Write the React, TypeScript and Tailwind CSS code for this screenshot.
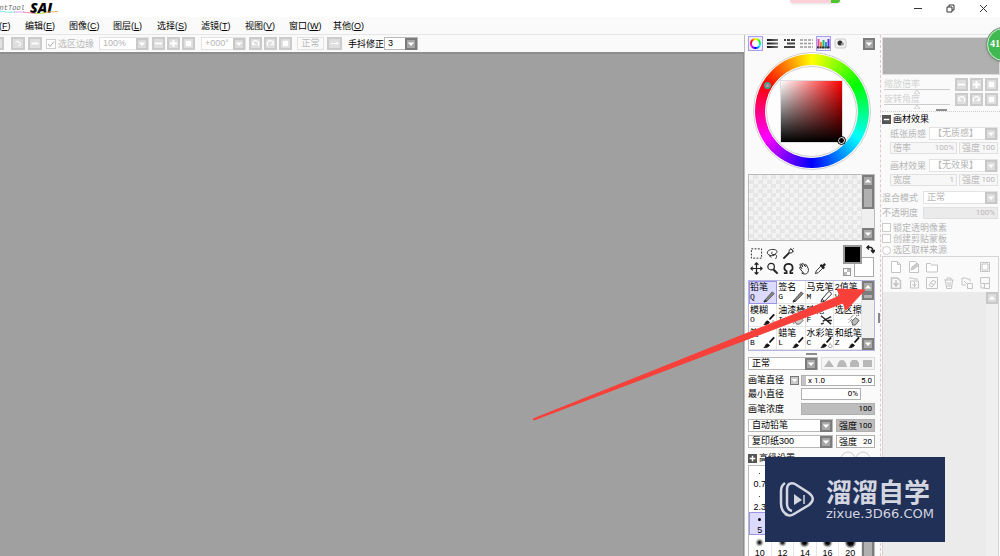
import type { ReactNode } from "react";
import clsx from "clsx";

const menus = [
  ["文件", "F"],
  ["编辑", "E"],
  ["图像", "C"],
  ["图层", "L"],
  ["选择", "S"],
  ["滤镜", "T"],
  ["视图", "V"],
  ["窗口", "W"],
  ["其他", "O"],
];

const brushes = [
  { name: "铅笔", key: "Q", kind: "pencil" },
  { name: "签名", key: "G", kind: "pencil" },
  { name: "马克笔", key: "M", kind: "marker" },
  { name: "2值笔", key: "V", kind: "pencil" },
  { name: "模糊", key: "O", kind: "water" },
  { name: "油漆桶", key: "I", kind: "bucket" },
  { name: "喷枪", key: "F", kind: "spray" },
  { name: "选区擦", key: "", kind: "select" },
  { name: "笔", key: "B", kind: "brush" },
  { name: "蜡笔", key: "L", kind: "brush" },
  { name: "水彩笔", key: "C", kind: "water" },
  { name: "和纸笔", key: "Z", kind: "brush" },
];

const sizes = [
  "0.7", "", "", "", "",
  "2.3", "", "", "", "",
  "5", "", "", "", "",
  "10", "12", "14", "16", "20",
];

function Glyph({ name }: { name: string }) {
  const shapes: Record<string, ReactNode> = {
    down: <path d="M1 3h8L5 7.500z" fill="currentColor" />,
    up: <path d="M1 7h8L5 2.500z" fill="currentColor" />,
    minus: <path d="M1 5h8" stroke="currentColor" strokeWidth="2" />,
    plus: <path d="M1 5h8M5 1v8" stroke="currentColor" strokeWidth="2" />,
    box: <rect x="2" y="2" width="6" height="6" fill="currentColor" />,
    left: <path d="M7.5 7.5A3.3 3.3 0 1 0 2 6M2 3v3h3" stroke="currentColor" strokeWidth="1.500" fill="none" />,
    right: <path d="M2.5 7.5A3.3 3.3 0 1 1 8 6M8 3v3H5" stroke="currentColor" strokeWidth="1.500" fill="none" />,
    undo: <path d="M2 4l3-2v2h2.5v3H5" stroke="currentColor" fill="none" />,
    flip: <path d="M1 5h8M7 3l2 2-2 2" stroke="currentColor" fill="none" />,
  };
  return (
    <svg viewBox="0 0 10 10" className="size-full" aria-hidden="true">
      {shapes[name]}
    </svg>
  );
}

function SmallButton({ icon, label, className }: { icon: string; label: string; className?: string }) {
  return (
    <button
      aria-label={label}
      className={clsx(
        "size-[13px] shrink-0 border-2 border-[#cbcbcb] bg-[#dedede] text-white",
        className
      )}
    >
      <Glyph name={icon} />
    </button>
  );
}

function Arrow({ icon = "down", faded = false }: { icon?: string; faded?: boolean }) {
  return (
    <span
      className={clsx(
        "block size-3 shrink-0 border-2 text-white",
        faded ? "border-[#c8c8c8] bg-[#dcdcdc]" : "border-[#7c7c7c] bg-[#a8a8a8]"
      )}
    >
      <Glyph name={icon} />
    </span>
  );
}

function Dropdown({ label, value, faded, className }: { label: string; value: string; faded?: boolean; className?: string }) {
  return (
    <div
      className={clsx(
        "flex h-[13px] items-center border bg-white",
        faded ? "border-[#e2e2e2] text-[#b5b5b5]" : "border-[#b8b8b8]",
        className
      )}
    >
      <select aria-label={label} className="h-[11px] min-w-0 flex-1 appearance-none pl-[3px] leading-[11px] outline-none">
        <option>{value}</option>
      </select>
      <Arrow faded={faded} />
    </div>
  );
}

function ValueBox({ label, text, value, faded, fill, className }: {
  label: string;
  text?: boolean;
  value: string;
  faded?: boolean;
  fill?: boolean;
  className?: string;
}) {
  return (
    <label
      className={clsx(
        "flex h-3 items-center border px-0.5",
        faded ? "border-[#e0e0e0] text-[#b8b8b8]" : "border-[#b0b0b0]",
        fill ? (faded ? "bg-[#ebebeb]" : "bg-[#bdbdbd]") : faded ? "bg-[#f7f7f7]" : "bg-white",
        className
      )}
    >
      {text && <span className="shrink-0">{label}</span>}
      <input
        aria-label={label}
        defaultValue={value}
        className="h-[10px] w-0 min-w-0 flex-1 text-right font-['Roboto',sans-serif] text-[8px] leading-[10px] outline-none"
      />
    </label>
  );
}

function Scrollbar({ thumb, bottom = true, faded = false }: { thumb: string; bottom?: boolean; faded?: boolean }) {
  return (
    <div className="flex w-3 shrink-0 flex-col bg-[#efefef]">
      <Arrow icon="up" faded={faded} />
      {thumb && <div className={clsx("border-2 border-[#7c7c7c] bg-[#b0b0b0]", thumb)} />}
      <div className="flex-1" />
      {bottom && <Arrow />}
    </div>
  );
}

function Grip() {
  return <div className="mx-auto h-[2px] w-[11px] shrink-0 bg-[#8d8d8d]" />;
}

function TitleBar() {
  return (
    <header className="flex h-[17px] shrink-0 items-start justify-between bg-white">
      <div className="relative flex h-[15px] items-center">
        <span className="-ml-[13px] w-[43px] font-['Liberation_Mono',monospace] text-[7px] text-[#666] italic">
          PaintTool
        </span>
        <span className="font-['Open_Sans',sans-serif] text-[14px] leading-[15px] font-extrabold text-black italic">SAI</span>
        <svg className="absolute top-[10px] left-0 h-[5px] w-[60px]" viewBox="0 0 60 5" fill="none" aria-hidden="true">
          <path d="M0 1q7 2 15 1" stroke="#7fe8e0" />
          <path d="M14 2h10" stroke="#d9a7ee" />
          <path d="M23 2l12 1.500" stroke="#f58bb0" />
          <path d="M35 3.500q6 .5 12-1" stroke="#bce05a" />
          <path d="M46 2.500q6-1 12-1" stroke="#f4b26a" />
        </svg>
      </div>
      <div className="flex h-4 items-center text-[#333]">
        <button aria-label="最小化" className="flex w-[33px] justify-center">
          <svg className="size-[9px]" viewBox="0 0 9 9"><path d="M1 4.500h8" stroke="currentColor" /></svg>
        </button>
        <button aria-label="还原" className="flex w-[33px] justify-center">
          <svg className="size-[9px]" viewBox="0 0 9 9" fill="none" stroke="currentColor">
            <path d="M1 3h5v5H1zM3 3V1h5v5H6" />
          </svg>
        </button>
        <button aria-label="关闭" className="flex w-[33px] justify-center">
          <svg className="size-[9px]" viewBox="0 0 9 9"><path d="M1 1l7 7M8 1L1 8" stroke="currentColor" /></svg>
        </button>
      </div>
    </header>
  );
}

function Toolbar() {
  return (
    <div className="flex h-[17px] shrink-0 items-center bg-[#fafafa] text-[#b8b8b8]">
      <SmallButton icon="box" label="取消选择" className="-ml-[9px]" />
      <SmallButton icon="undo" label="反选" className="ml-[7px] w-[14px]" />
      <SmallButton icon="minus" label="显示选区" className="ml-[3px] w-[14px]" />
      <label className="ml-1 flex items-center gap-0.5">
        <input type="checkbox" defaultChecked className="peer sr-only" />
        <svg className="size-[10px] border border-[#cfcfcf] bg-white" viewBox="0 0 8 8" fill="none">
          <path d="M1 4l2 2.500 4-5" stroke="#aaa" />
        </svg>
        选区边缘
      </label>
      <Dropdown label="缩放" value="100%" faded className="ml-[5px] w-[50px]" />
      <div className="ml-[3px] flex gap-[2px]">
        <SmallButton icon="minus" label="缩小" />
        <SmallButton icon="plus" label="放大" />
        <SmallButton icon="box" label="重置缩放" />
      </div>
      <Dropdown label="角度" value="+000°" faded className="ml-[6px] w-[45px]" />
      <div className="ml-[3px] flex gap-[2px]">
        <SmallButton icon="left" label="左旋" />
        <SmallButton icon="right" label="右旋" />
        <SmallButton icon="box" label="重置角度" />
      </div>
      <button className="ml-[5px] h-[13px] w-[27px] border border-[#e2e2e2] leading-[11px]">正常</button>
      <SmallButton icon="flip" label="水平翻转" className="ml-[3px] w-[15px]" />
      <span className="ml-[6px] text-black">手抖修正</span>
      <Dropdown label="手抖修正" value="3" className="w-[34px] text-black" />
    </div>
  );
}

function ColorTabs() {
  return (
    <div className="flex h-[15px] shrink-0 items-center justify-between">
      <div className="flex gap-[2px]">
        <button aria-label="色环" className="size-[15px] border border-[#a79df0] bg-[#eeecff] p-px">
          <span className="block size-[11px] rounded-full bg-[conic-gradient(from_-60deg,red,yellow,lime,cyan,blue,magenta,red)] p-[2px]">
            <span className="block size-full rounded-full bg-white" />
          </span>
        </button>
        <button aria-label="RGB滑块" className="size-[15px]">
          <svg viewBox="0 0 15 15">
            <defs>
              <linearGradient id="bar" x2="1"><stop stopColor="#111" /><stop offset="1" stopColor="#777" /></linearGradient>
            </defs>
            <path d="M2 3h11v2H2zM2 6.500h11v2H2zM2 10h11v2H2z" fill="url(#bar)" />
          </svg>
        </button>
        <button aria-label="HSV滑块" className="size-[15px]">
          <svg viewBox="0 0 15 15">
            <path d="M2 3h2v2H2zM5 3h3v2H5zM9 3h4v2H9zM5 6.500h8v2H5zM2 10h11v2H2z" fill="#444" />
          </svg>
        </button>
        <button aria-label="中间色" className="size-[15px]">
          <svg viewBox="0 0 15 15">
            <path d="M1 4h13M1 7.500h13M1 11h13" stroke="#999" strokeWidth="1.500" strokeDasharray="3 1" />
          </svg>
        </button>
        <button aria-label="色板" className="size-[15px] border border-[#a79df0] bg-[#eeecff]">
          <svg viewBox="0 0 13 13">
            <path d="M1.500 2v9" stroke="#ec4a9a" strokeWidth="2" />
            <path d="M4 5v6" stroke="#e8902e" strokeWidth="2" />
            <path d="M6.500 3v8" stroke="#29b867" strokeWidth="2" />
            <path d="M9 5v6" stroke="#2a96e0" strokeWidth="2" />
            <path d="M11.500 2v9" stroke="#6b35d9" strokeWidth="2" />
            <path d="M0 10.500h13" stroke="#333" strokeWidth="2" strokeDasharray="2 .5" />
          </svg>
        </button>
        <button aria-label="便笺" className="size-[15px]">
          <svg viewBox="0 0 15 15">
            <rect x="2" y="3" width="11" height="9" rx="2" fill="#f1f1f1" stroke="#ccc" />
            <circle cx="7" cy="7" r="2.500" fill="#333" />
            <circle cx="9.500" cy="8" r="1.500" fill="#999" />
          </svg>
        </button>
      </div>
      <Arrow />
    </div>
  );
}

function ColorWheel() {
  return (
    <div className="relative mx-auto mt-px flex size-[118px] shrink-0 items-center justify-center rounded-full border border-[#d0d0d0] bg-white p-px">
      <div className="flex size-full items-center justify-center rounded-full bg-[conic-gradient(from_-60deg,red,yellow,lime,cyan,blue,magenta,red)]">
        <div className="flex size-[93px] items-center justify-center rounded-full border border-white bg-[#d0d0d0] p-px">
          <div className="flex size-full items-center justify-center rounded-full bg-[#fdfdfd]">
            <div className="size-[63px] border border-[#ddd] bg-[linear-gradient(to_top,#000,transparent),linear-gradient(to_right,#fff,#f00)]" />
          </div>
        </div>
      </div>
      <span className="absolute top-[29px] left-[10px] size-[7px] rounded-full border-2 border-[#4a9d96] bg-[#d88]" />
      <span className="absolute top-[84px] left-[84px] size-[7px] rounded-full border border-white bg-black outline outline-black" />
    </div>
  );
}

function ToolIcon({ kind }: { kind: string }) {
  return (
    <svg viewBox="0 0 14 14" className="size-[13px]" fill="none" stroke="#222" aria-hidden="true">
      {kind === "rect" && <rect x="1.500" y="2" width="11" height="10" strokeDasharray="2 1.500" />}
      {kind === "lasso" && (
        <path d="M9 9C4 10 1 8 1.500 5.500S7 2 10 3s2 4-1 5-4-2-2-2.500M9 8c3 0 3 3 1 5M4 9v1l2 1" />
      )}
      {kind === "wand" && (
        <>
          <path d="M1.500 12.500L8 6" strokeWidth="2" />
          <circle cx="9.500" cy="4.500" r="2" />
          <path d="M9.500 1v1M12 4.500h1M11.500 2.500l1-1" />
        </>
      )}
      {kind === "move" && (
        <path d="M7 1v12M1 7h12M5 3l2-2 2 2M5 11l2 2 2-2M3 5L1 7l2 2M11 5l2 2-2 2" strokeWidth="1.300" />
      )}
      {kind === "zoom" && (
        <>
          <circle cx="5.500" cy="5" r="3.500" strokeWidth="1.300" />
          <path d="M8 8l4.500 4.500" strokeWidth="2.200" />
        </>
      )}
      {kind === "rotate" && <path d="M2 12h3V10C1 8 2 2 7 2s6 6 2 8v2h3" strokeWidth="1.800" />}
      {kind === "hand" && (
        <path d="M6 12L2 7c-1-1 0-2 1-1l1 1-2-4c0-1 1-1 2 0l1 2-1-3c1-1 2 0 2 0l2 3-1-2c1-1 2 0 2 0l2 4c1 3-1 6-3 6s-3-.5-4-1z" />
      )}
      {kind === "dropper" && (
        <>
          <path d="M1.500 12.500l1-3 5-5 2 2-5 5z" fill="#fff" />
          <path d="M7 3l4 4M8.500 5.500l3.500-3.500" strokeWidth="2.500" />
        </>
      )}
    </svg>
  );
}

function BrushIcon({ kind }: { kind: string }) {
  return (
    <svg viewBox="0 0 14 14" className="size-[13px]" fill="none" stroke="#222" aria-hidden="true">
      {kind === "pencil" && (
        <>
          <path d="M2 11l8-9 2 2-8 8z" fill="#888" stroke="#555" />
          <path d="M2 11l-1 2 3-1" fill="#222" />
        </>
      )}
      {kind === "marker" && <path d="M2 10l7-8c1-1 4 1 3 3l-7 7-4 1zM2 10l3 2" fill="#fff" />}
      {(kind === "brush" || kind === "water") && (
        <>
          <path d="M7 7l5-5.500" stroke="#111" strokeWidth="2" />
          <path d="M1 12.500c2-1 1-4 4-4l2 1.500c-1 2-3 2.500-6 2.500z" fill="#111" />
          {kind === "water" && <path d="M11 8c-1 2-2 2.500-2 3.500s4 1.500 4 0S12 10 11 8z" fill="#fff" stroke="#999" />}
        </>
      )}
      {kind === "bucket" && <path d="M2 7l5-4 5 5-4 4H5zM2 7v5M7 3V1" fill="#ccc" stroke="#666" />}
      {kind === "spray" && <path d="M1 3l5 4 6-3M3 9l3-2 6 5M1 12l3-1M8 8l5 0" strokeWidth="1.500" />}
      {kind === "select" && (
        <>
          <path d="M1 7l5-5M1 10l4-4M9 3l4-1" strokeDasharray="1 1" />
          <path d="M4 9l4-4 4 3-4 5H5z" fill="#bbb" stroke="#555" />
        </>
      )}
    </svg>
  );
}

function Tools() {
  const rows = [
    ["rect", "lasso", "wand"],
    ["move", "zoom", "rotate", "hand", "dropper"],
  ];
  return (
    <div className="mt-1 flex h-[35px] shrink-0 justify-between">
      <div className="mt-[2px] flex flex-col gap-[2px] pl-[2px]">
        {rows.map((row, i) => (
          <div key={i} className="flex gap-[3px]">
            {row.map((kind) => (
              <button key={kind} aria-label={kind} className="size-[13px]">
                <ToolIcon kind={kind} />
              </button>
            ))}
          </div>
        ))}
      </div>
      <div className="relative w-8">
        <button aria-label="背景色" className="absolute top-[12px] right-px size-5 border border-[#aaa] bg-white" />
        <button aria-label="前景色" className="absolute top-0 left-0 size-[19px] border-2 border-[#999] bg-black" />
        <svg className="absolute top-0 right-0 size-[9px]" viewBox="0 0 9 9" fill="none" stroke="#222">
          <path d="M1 2.500c4-1 6 0 6 4M3 .5l-2 2 2 2M5 5l2 2.500L9 5" strokeWidth="1.500" />
        </svg>
        <svg className="absolute top-[23px] left-0 size-2" viewBox="0 0 8 8">
          <rect x=".5" y=".5" width="7" height="7" fill="#fff" stroke="#999" />
          <path d="M4 1h3v3H4zM1 4h3v3H1z" fill="#bbb" />
        </svg>
      </div>
    </div>
  );
}

function ToolColumn() {
  return (
    <aside className="flex w-[136px] shrink-0 flex-col border-l border-[#bdbdbd] bg-[#fafafa] pt-px pr-[5px] pl-[3px]">
      <ColorTabs />
      <ColorWheel />
      <div className="mt-1 flex h-[67px] shrink-0 border border-[#bbb]">
        <div className="flex-1 bg-[#f3f3f3] bg-[conic-gradient(#e6e6e6_25%,transparent_0_50%,#e6e6e6_0_75%,transparent_0)] bg-[size:9px_9px]" />
        <Scrollbar thumb="h-[22px]" />
      </div>
      <Tools />
      <div className="flex h-[71px] shrink-0 border border-[#b5b5e0]">
        <div className="grid flex-1 grid-cols-4 grid-rows-3">
          {brushes.map((b, i) => (
            <button
              key={b.name}
              className={clsx(
                "relative flex flex-col items-start border-r border-b border-[#e4e4e4] pl-px text-left whitespace-nowrap",
                i === 0 ? "bg-[#dcdaff] outline-1 -outline-offset-1 outline-[#9c94e8]" : "bg-white"
              )}
            >
              <span className="leading-[12px]">{b.name}</span>
              <span className="font-['Liberation_Mono',monospace] text-[8px] leading-[7px]">{b.key}</span>
              <span className="absolute right-0 bottom-0">
                <BrushIcon kind={b.kind} />
              </span>
            </button>
          ))}
        </div>
        <Scrollbar thumb="h-[7px]" />
      </div>
      <div className="mt-[2px] mb-[2px] flex shrink-0"><Grip /></div>
      <div className="flex shrink-0 gap-[3px]">
        <Dropdown label="混合模式" value="正常" className="w-[70px]" />
        <svg
          className="h-[13px] min-w-0 flex-1 border border-[#ddd] bg-[#f5f5f5]"
          viewBox="0 0 52 11"
          preserveAspectRatio="xMidYMid slice"
          fill="#b8b8b8"
        >
          <path d="M2 9l5-7 5 7zM15 9c1-4 2-7 5-7s4 3 5 7zM28 9V5l2-3h5l2 3v4zM41 2h9v7h-9z" />
        </svg>
      </div>
      <div className="mt-[5px] flex shrink-0 items-center">
        <span className="w-[42px] leading-[11px]">画笔直径</span>
        <button aria-label="直径单位" className="mr-[2px] size-[9px] border border-[#777] bg-[#c9c9c9] text-white"><Glyph name="down" /></button>
        <div className="flex h-[11px] flex-1 items-center border border-[#b0b0b0] bg-white pr-[2px] font-['Roboto',sans-serif] text-[8px]">
          <span className="h-full w-1 bg-[#c4c4c4]" />
          <span className="ml-[2px] whitespace-nowrap">x 1.0</span>
          <input aria-label="画笔直径" defaultValue="5.0" className="h-[9px] w-0 flex-1 text-right outline-none" />
        </div>
      </div>
      <div className="mt-[2px] flex shrink-0 items-center">
        <span className="w-[53px] leading-[11px]">最小直径</span>
        <ValueBox label="最小直径" value="0%" className="w-[60px]" />
      </div>
      <div className="mt-[3px] flex shrink-0 items-center">
        <span className="w-[53px] leading-[12px]">画笔浓度</span>
        <ValueBox label="画笔浓度" value="100" fill className="flex-1" />
      </div>
      <div className="mt-1 flex shrink-0 gap-[3px]">
        <Dropdown label="笔刷形状" value="自动铅笔" className="w-[85px]" />
        <ValueBox label="强度" text value="100" fill className="h-[13px] flex-1" />
      </div>
      <div className="mt-[3px] flex shrink-0 gap-[3px]">
        <Dropdown label="笔刷材质" value="复印纸300" className="w-[85px]" />
        <ValueBox label="强度" text value="20" className="h-[13px] flex-1" />
      </div>
      <div className="mt-[3px] flex h-[14px] shrink-0 items-center justify-between">
        <button className="flex items-center gap-[2px]">
          <span className="size-[9px] bg-[#555] p-px text-white"><Glyph name="plus" /></span>
          高级设置
        </button>
        <svg className="h-[14px] w-9" viewBox="0 0 36 14" fill="none" stroke="#ccc">
          <circle cx="9" cy="8" r="7" />
          <circle cx="24" cy="8" r="7" />
        </svg>
      </div>
      <div className="flex min-h-0 flex-1 overflow-hidden border border-b-0 border-[#bbb]">
        <div className="grid flex-1 auto-rows-[23px] grid-cols-5">
          {sizes.map((s, i) => (
            <button
              key={i}
              className={clsx(
                "flex flex-col items-center justify-between border-r border-[#e6e6e6] pt-[3px]",
                s === "5" ? "bg-[#dcdaff] outline-1 -outline-offset-1 outline-[#9c94e8]" : "bg-white"
              )}
            >
              <span className="flex h-2 items-center justify-center">
                <span
                  className={clsx(
                    "rounded-full bg-black",
                    i < 10 ? "size-px" : i < 15 ? "size-[3px]" : i < 17 ? "size-[5px] blur-[1px]" : i < 19 ? "size-[7px] blur-[1px]" : "size-[9px] blur-[1px]"
                  )}
                />
              </span>
              <span className="leading-[9px]">{s}</span>
            </button>
          ))}
        </div>
        <div className="w-3 border-x-2 border-[#7c7c7c] bg-[#b0b0b0]" />
      </div>
    </aside>
  );
}

function LayerIcon({ kind }: { kind: string }) {
  return (
    <svg viewBox="0 0 12 12" className="size-3" fill="none" stroke="#c4c4c4" aria-hidden="true">
      {kind === "page" && <path d="M1.500.5h6l3 3v8h-9zM7.500.5v3h3" fill="#fff" />}
      {kind === "pen" && (
        <>
          <path d="M1.500.5h6l3 3v8h-9z" fill="#fff" />
          <path d="M3 9l1-3 5-4 2 2-5 4z" fill="#ccc" />
        </>
      )}
      {kind === "folder" && <path d="M.5 2.500h4l1 1.500h6v7H.5z" fill="#fff" />}
      {kind === "square" && <path d="M1.500 1.500h9v9h-9zM3 3h6v6H3z" fill="#fff" />}
      {kind === "down" && <path d="M1.500 1h6l3 3v7.500h-9zM6 3v6M3.500 6L6 9l2.500-3" strokeWidth="1.500" />}
      {kind === "merge" && <path d="M1 1h4l1 1h4M2.500 4h8v7h-8zM6.500 5v5M4.500 7l2 2.500 2-2.500" />}
      {kind === "clear" && <path d="M.5.5h11v11H.5zM3 8l4-5 3 2-4 5zM5 6l3 2" />}
      {kind === "trash" && <path d="M1 3h10M4 3V1h4v2M2.500 3l1 8.500h5l1-8.500M5 5v5M7 5v5" />}
      {kind === "mask" && <path d="M1 1h4l1 1h3v3M1 1v7h4M6.500 6.500h5v5h-5zM3 4l3 3" />}
      {kind === "apply" && <path d="M1.500.5h9v6h-9zM5.500 6.500h5v5h-5zM2 8v3h3" />}
    </svg>
  );
}

function PanelRow({ label, children }: { label: string; children: ReactNode }) {
  return (
    <div className="flex h-[13px] shrink-0 items-center justify-between pr-[2px]">
      <span className="whitespace-nowrap">{label}</span>
      {children}
    </div>
  );
}

function LayerColumn() {
  const nav = [
    { name: "缩放倍率", icons: ["minus", "plus", "box"] },
    { name: "旋转角度", icons: ["left", "right", "box"] },
  ];
  return (
    <aside className="flex w-[120px] shrink-0 flex-col border-l border-dashed border-[#e0c8c8] bg-[#fafafa] pl-px text-[#b5b5b5]">
      <div className="mt-[2px] h-[38px] shrink-0 border border-[#ddd] bg-[#b0b0b0]" />
      <div className="mt-[3px] flex shrink-0 flex-col gap-[2px] pr-[2px]">
        {nav.map((n) => (
          <div key={n.name} className="flex h-[13px] items-center justify-between pl-[2px]">
            <div className="relative w-[66px] border-b border-[#ccc] leading-[9px] text-[#d2d2d2]">
              {n.name}
              <svg className="absolute -bottom-[5px] left-[30px] h-1 w-[6px]" viewBox="0 0 6 4">
                <path d="M0 4l3-4 3 4z" fill="#fff" stroke="#ccc" />
              </svg>
            </div>
            <div className="flex gap-[2px]">
              {n.icons.map((icon) => (
                <SmallButton key={icon} icon={icon} label={n.name + icon} />
              ))}
            </div>
          </div>
        ))}
      </div>
      <div className="mt-[3px] flex shrink-0 border-b border-dotted border-[#ccc]"><Grip /></div>
      <button className="mt-px flex h-3 shrink-0 items-center gap-[2px] text-black">
        <span className="size-[9px] bg-[#555] p-px text-white"><Glyph name="minus" /></span>
        画材效果
      </button>
      <div className="mt-[2px] flex shrink-0 flex-col gap-[2px] pl-2">
        <PanelRow label="纸张质感">
          <Dropdown label="纸张质感" value="【无质感】" faded className="w-[69px]" />
        </PanelRow>
        <div className="flex gap-[2px] pr-[2px]">
          <ValueBox label="倍率" text value="100%" faded className="w-[67px]" />
          <ValueBox label="强度" text value="100" faded className="flex-1" />
        </div>
        <div className="h-px" />
        <PanelRow label="画材效果">
          <Dropdown label="画材效果" value="【无效果】" faded className="w-[69px]" />
        </PanelRow>
        <div className="flex gap-[2px] pr-[2px]">
          <ValueBox label="宽度" text value="1" faded className="w-[67px]" />
          <ValueBox label="强度" text value="100" faded className="flex-1" />
        </div>
      </div>
      <div className="mt-[5px] flex shrink-0 flex-col gap-[2px]">
        <PanelRow label="混合模式">
          <Dropdown label="图层混合模式" value="正常" faded className="w-[75px]" />
        </PanelRow>
        <PanelRow label="不透明度">
          <ValueBox label="不透明度" value="100%" faded fill className="w-[75px]" />
        </PanelRow>
      </div>
      <div className="mt-[3px] flex shrink-0 flex-col">
        {["锁定透明像素", "创建剪贴蒙板"].map((t) => (
          <label key={t} className="flex h-[11px] items-center gap-[2px]">
            <input type="checkbox" className="size-[9px] appearance-none border border-[#ccc] bg-white" />
            {t}
          </label>
        ))}
        <label className="flex h-[12px] items-center gap-[2px]">
          <input type="radio" className="size-[9px] appearance-none rounded-full border border-[#ccc] bg-white" />
          选区取样来源
        </label>
      </div>
      <div className="mr-px flex min-h-0 flex-1 flex-col border border-b-0 border-[#d5d5d5]">
        <div className="grid shrink-0 grid-cols-6 justify-items-center gap-y-1 px-1 pt-1 pb-[3px]">
          {["page", "pen", "folder", "", "", "square", "down", "merge", "clear", "trash", "mask", "apply"].map((k, i) =>
            k ? (
              <button key={i} aria-label={k}>
                <LayerIcon kind={k} />
              </button>
            ) : (
              <span key={i} />
            )
          )}
        </div>
        <div className="flex flex-1 bg-[#ebebeb]">
          <div className="flex-1" />
          <Scrollbar thumb="" bottom={false} faded />
        </div>
      </div>
    </aside>
  );
}

function Watermark() {
  return (
    <div className="absolute top-[457px] left-[765px] flex h-[85px] w-[180px] items-center bg-[#213056] pl-[14px] text-[#d3d6e0]">
      <svg className="h-[38px] w-[36px] shrink-0" viewBox="0 0 36 38" fill="none" stroke="currentColor">
        <path d="M9 34C4 32 2 28 2 22V10c0-4 1-6 4-8" strokeWidth="2.500" />
        <path d="M13 30c-4-1-5-3-5-7V8c0-5 4-7 8-5l14 9c5 4 5 8 0 12L15 33c-3 2-6 2-9 0" strokeWidth="2.500" />
        <path d="M15 13l8 6-8 5z" fill="currentColor" stroke="none" />
        <path d="M25 14v9" strokeWidth="1.500" />
      </svg>
      <div className="ml-[11px]">
        <div className="text-[26px] leading-[28px] font-bold">溜溜自学</div>
        <div className="font-['DejaVu_Sans',sans-serif] text-[13px] leading-[14px]">zixue.3D66.COM</div>
      </div>
    </div>
  );
}

export default function App() {
  return (
    <div className="relative flex h-screen flex-col overflow-hidden bg-[#fafafa] font-['Liberation_Sans','Noto_Sans_CJK_SC',sans-serif] text-[9px] leading-[12px] text-black">
      <TitleBar />
      <nav className="-ml-5 flex h-[18px] shrink-0 items-center border-b border-[#e6e6e6]">
        {menus.map(([name, key]) => (
          <button key={key} className="w-11 pl-px text-left whitespace-nowrap">
            {name}(<u>{key}</u>)
          </button>
        ))}
      </nav>
      <div className="flex min-h-0 flex-1">
        <main className="flex min-w-0 flex-1 flex-col">
          <Toolbar />
          <div className="flex-1 border-t-2 border-r border-[#8e8e8e] bg-[#a0a0a0]" />
        </main>
        <ToolColumn />
        <LayerColumn />
      </div>

      <span className="absolute top-[313px] left-[878px] h-[10px] w-[2px] bg-[#888]" />
      <svg className="pointer-events-none absolute top-[280px] left-[530px] h-[145px] w-[340px]" viewBox="0 0 340 145">
        <path d="M3 139L310 16l-3-7 28 1-19 20-3-7L4 140z" fill="#f8403a" stroke="#f8403a" strokeLinejoin="round" />
      </svg>
      <div className="absolute top-0 left-[790px] flex h-[3px] w-[50px] overflow-hidden rounded-b-sm bg-[#ffd0d8] shadow-sm">
        <span className="ml-auto w-[9px] bg-[#4bc62f]" />
      </div>
      <div className="absolute top-[27px] left-[986px] size-[35px] rounded-full border border-[#8a8a8a] bg-[#3fb950] pt-[10px] pl-[3px] font-['Liberation_Serif',serif] text-[10px] font-bold text-white shadow outline-1 -outline-offset-2 outline-[#d5f0d8]">
        41
      </div>
      <Watermark />
    </div>
  );
}
